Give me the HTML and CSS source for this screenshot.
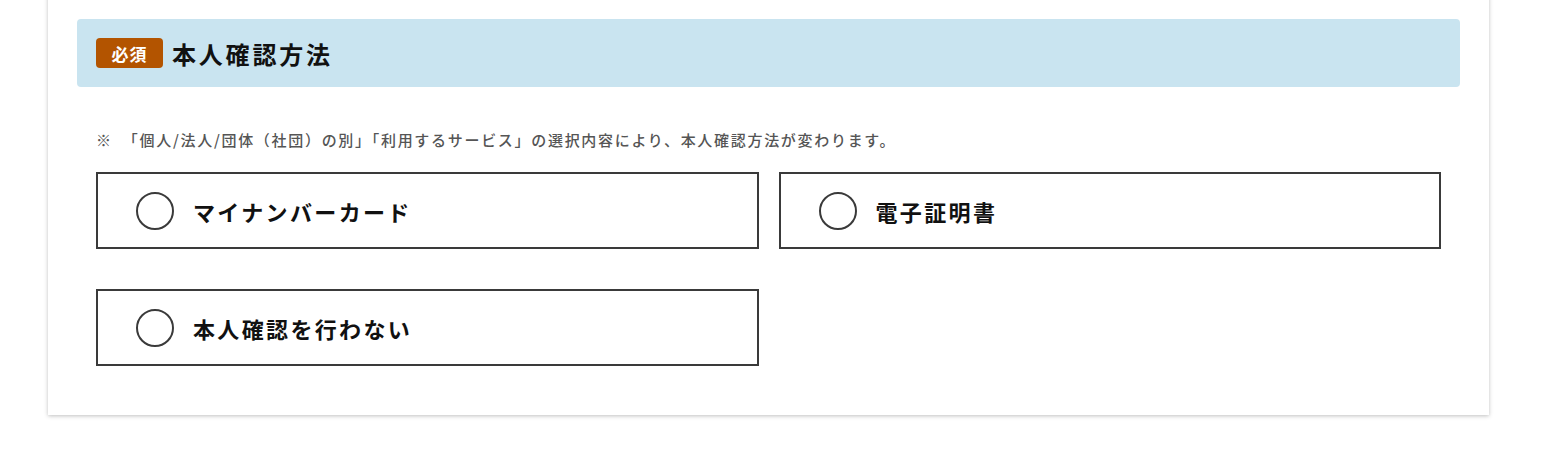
FILE: index.html
```html
<!DOCTYPE html>
<html lang="ja">
<head>
<meta charset="utf-8">
<title>本人確認方法</title>
<link rel="stylesheet" href="styles.css">
</head>
<body>
<div class="card">
  <div class="section-head">
    <span class="badge">必須</span>
    <h2 class="title">本人確認方法</h2>
  </div>
  <div class="body">
    <p class="note">※&nbsp;&nbsp;「個人/法人/団体（社団）の別」「利用するサービス」の選択内容により、本人確認方法が変わります。</p>
    <div class="options">
      <label class="option"><span class="radio"></span><span class="label">マイナンバーカード</span></label>
      <label class="option"><span class="radio"></span><span class="label">電子証明書</span></label>
      <label class="option"><span class="radio"></span><span class="label">本人確認を行わない</span></label>
    </div>
  </div>
</div>
</body>
</html>
```

FILE: styles.css
```css
html, body {
  margin: 0;
  padding: 0;
  background: #ffffff;
  font-family: "Noto Sans CJK JP", "Noto Sans", sans-serif;
  color: #1a1a1a;
}

body {
  padding-bottom: 30px;
}

.card {
  margin: -10px 0 0 48px;
  width: 1441px;
  box-sizing: border-box;
  background: #ffffff;
  padding: 29px 29px 49px 29px;
  box-shadow: 0 1px 4px rgba(0, 0, 0, 0.25);
}

.section-head {
  display: flex;
  align-items: center;
  height: 68px;
  padding-left: 19px;
  background: #c9e4f0;
  border-radius: 4px;
}

.badge {
  display: flex;
  align-items: center;
  justify-content: center;
  width: 67px;
  height: 30px;
  background: #b35400;
  color: #ffffff;
  border-radius: 4px;
  font-size: 17px;
  font-weight: 700;
  letter-spacing: 1px;
}

.title {
  margin: 0 0 0 9px;
  font-size: 24px;
  font-weight: 700;
  letter-spacing: 2.8px;
  color: #111111;
}

.body {
  padding: 0 19px;
}

.note {
  margin: 43px 0 22px 0;
  font-size: 15px;
  line-height: 20px;
  letter-spacing: 1.7px;
  color: #555555;
  font-weight: 500;
}

.options {
  display: grid;
  grid-template-columns: 1fr 1fr;
  column-gap: 20px;
  row-gap: 40px;
}

.option {
  display: flex;
  align-items: center;
  height: 77px;
  box-sizing: border-box;
  border: 2px solid #3a3a3a;
  padding-left: 38px;
}

.radio {
  width: 38px;
  height: 38px;
  box-sizing: border-box;
  border: 2px solid #3a3a3a;
  border-radius: 50%;
  flex: none;
}

.label {
  margin-left: 19px;
  font-size: 22px;
  font-weight: 700;
  letter-spacing: 2.35px;
  color: #111111;
}
```
